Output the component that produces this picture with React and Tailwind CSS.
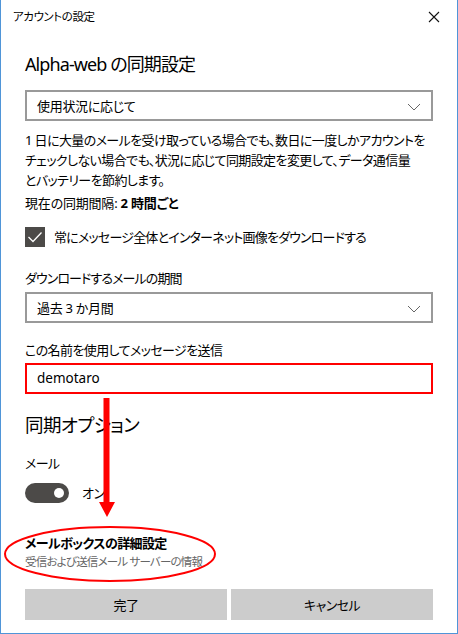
import React from 'react';

const font = "font-['Noto_Sans','Noto_Sans_CJK_JP',sans-serif] [font-feature-settings:'palt']";

const Chevron = () => (
  <svg width="14" height="8" viewBox="0 0 14 8" className="absolute right-[10px] top-[11px]">
    <path d="M1 1 L7 7 L13 1" fill="none" stroke="#666" strokeWidth="1" />
  </svg>
);

const Select = ({ value, className = '' }) => (
  <div className={`relative h-[31px] border-2 border-[#999] flex items-center pl-[10px] text-[13px] tracking-[-0.3px] leading-[20px] ${className}`}>
    <span>{value}</span>
    <Chevron />
  </div>
);

const body = 'text-[13px] tracking-[-0.6px] leading-[20px]';

export default function App() {
  return (
    <div className={`relative w-[458px] h-[634px] bg-white text-black overflow-hidden border-l border-r border-b border-[#4f95d8] ${font}`}>
      {/* Title bar */}
      <div className="h-[34px] flex items-center justify-between pl-[12px] pr-[17px]">
        <span className="text-[11.5px] tracking-[-0.4px] leading-[16px]">アカウントの設定</span>
        <svg width="12" height="12" viewBox="0 0 12 12">
          <path d="M1 1 L11 11 M11 1 L1 11" stroke="#111" strokeWidth="1.1" />
        </svg>
      </div>

      <div className="flex flex-col px-[24px]">
        <h1 className="mt-[16px] text-[18px] tracking-[-0.9px] leading-[28px] font-normal">Alpha-web の同期設定</h1>

        <Select value="使用状況に応じて" className="mt-[12px]" />

        <p className={`mt-[9px] whitespace-nowrap ${body}`}>
          1 日に大量のメールを受け取っている場合でも、数日に一度しかアカウントを<br />
          チェックしない場合でも、状況に応じて同期設定を変更して、データ通信量<br />
          とバッテリーを節約します。
        </p>

        <p className="mt-[3px] text-[13px] tracking-[-0.2px] leading-[20px]">
          現在の同期間隔: <span className="font-bold">2 時間ごと</span>
        </p>

        <div className="mt-[14px] flex items-center gap-[9px]">
          <div className="w-[20px] h-[20px] bg-[#4c4a48] flex items-center justify-center">
            <svg width="16" height="12" viewBox="0 0 16 12">
              <path d="M1.5 6 L6 10.5 L14.5 1.5" fill="none" stroke="#fff" strokeWidth="1.3" />
            </svg>
          </div>
          <span className="text-[13px] tracking-[-0.8px] leading-[20px]">常にメッセージ全体とインターネット画像をダウンロードする</span>
        </div>

        <p className="mt-[21px] text-[13px] tracking-[-0.9px] leading-[20px]">ダウンロードするメールの期間</p>
        <Select value="過去 3 か月間" className="mt-[4px]" />

        <p className={`mt-[17px] ${body}`}>この名前を使用してメッセージを送信</p>
        <div className="mt-[3px] h-[31px] border-2 border-[#ff0000] flex items-center pl-[10px] text-[13.5px]">
          demotaro
        </div>

        <h2 className="mt-[17px] text-[18.5px] tracking-[-0.6px] leading-[28px] font-normal">同期オプション</h2>

        <p className={`mt-[14px] ${body}`}>メール</p>
        <div className="mt-[10px] flex items-center gap-[13px]">
          <div className="w-[44px] h-[20px] rounded-full bg-[#4c4a48] flex items-center justify-end pr-[5px]">
            <div className="w-[10px] h-[10px] rounded-full bg-white" />
          </div>
          <span className={body}>オン</span>
        </div>

        <p className={`mt-[30px] font-bold ${body}`}>メールボックスの詳細設定</p>
        <p className="text-[11.5px] tracking-[-0.8px] leading-[18px] text-[#666]">受信および送信メール サーバーの情報</p>

        <div className="mt-[18px] flex gap-[4px]">
          <button className={`flex-1 h-[31px] bg-[#cccccc] ${body}`}>完了</button>
          <button className={`flex-1 h-[31px] bg-[#cccccc] ${body}`}>キャンセル</button>
        </div>
      </div>

      {/* Red annotations */}
      <svg className="absolute left-[96px] top-[398px]" width="20" height="120" viewBox="0 0 20 120">
        <rect x="6.5" y="0" width="6" height="106" fill="#ff0000" />
        <path d="M2 104 L18 104 L10 119 Z" fill="#ff0000" />
      </svg>
      <svg className="absolute left-[2px] top-[525px]" width="216" height="58" viewBox="0 0 216 58">
        <ellipse cx="107" cy="29" rx="105" ry="27" fill="none" stroke="#ff0000" strokeWidth="2" />
      </svg>
    </div>
  );
}
